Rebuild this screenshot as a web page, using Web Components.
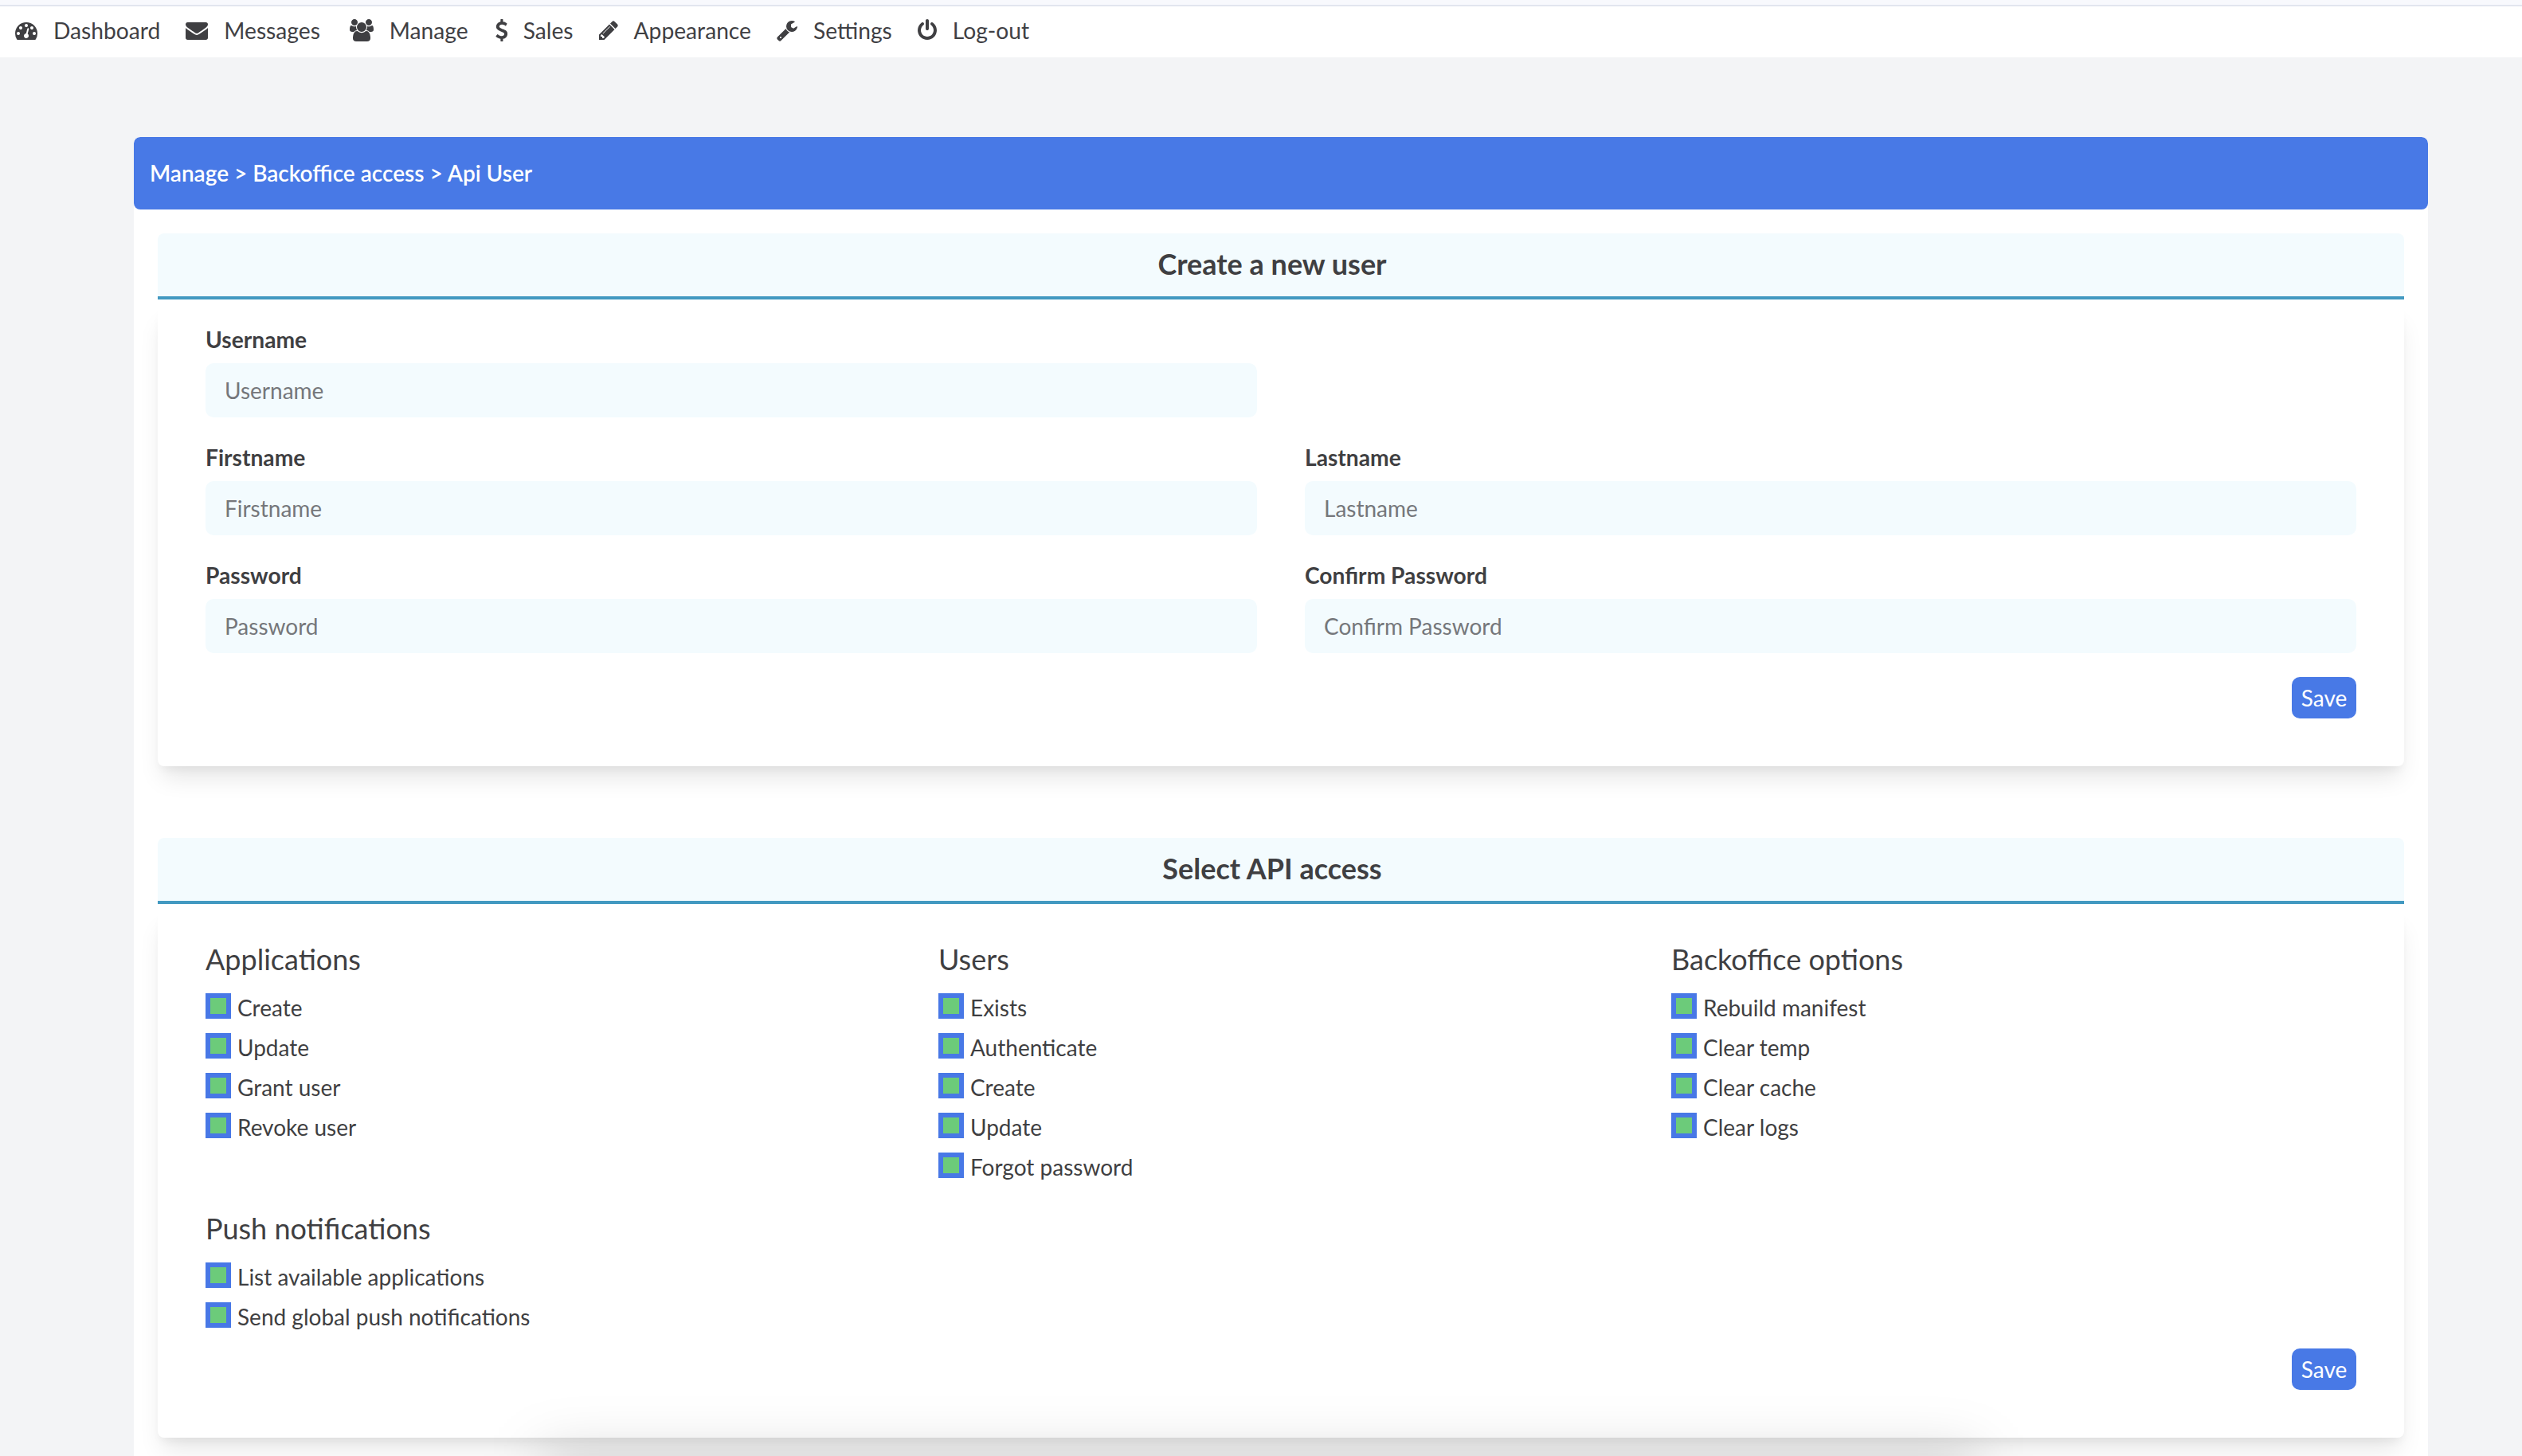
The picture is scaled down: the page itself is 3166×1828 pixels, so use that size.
<!DOCTYPE html>
<html>
<head>
<meta charset="utf-8">
<title>Api User</title>
<style>
    html, body { margin: 0; height: 100%; overflow: hidden; }
    body { background: #f3f4f6; color: #3f3f42; font: 28px/38px Lato, "Open Sans", sans-serif; }
</style>
</head>
<body>
<app-nav>
    <nav-item icon="dashboard">Dashboard</nav-item>
    <nav-item icon="envelope" style="margin-right: 5px">Messages</nav-item>
    <nav-item icon="users">Manage</nav-item>
    <nav-item icon="usd">Sales</nav-item>
    <nav-item icon="pencil">Appearance</nav-item>
    <nav-item icon="wrench">Settings</nav-item>
    <nav-item icon="power">Log-out</nav-item>
</app-nav>

<page-panel crumbs="Manage &gt; Backoffice access &gt; Api User">
    <section-card heading="Create a new user">
        <field-grid>
            <form-field label="Username"></form-field>
            <span></span>
            <form-field label="Firstname"></form-field>
            <form-field label="Lastname"></form-field>
            <form-field label="Password" type="password"></form-field>
            <form-field label="Confirm Password" type="password"></form-field>
        </field-grid>
        <save-button slot="footer">Save</save-button>
    </section-card>

    <section-card heading="Select API access" class="access">
        <access-grid>
            <access-group heading="Applications" items="Create|Update|Grant user|Revoke user"></access-group>
            <access-group heading="Users" items="Exists|Authenticate|Create|Update|Forgot password"></access-group>
            <access-group heading="Backoffice options" items="Rebuild manifest|Clear temp|Clear cache|Clear logs"></access-group>
            <access-group heading="Push notifications" items="List available applications|Send global push notifications"></access-group>
        </access-grid>
        <save-button slot="footer">Save</save-button>
    </section-card>
</page-panel>

<script>
const ICONS = {
    dashboard: ["0 0 1792 1792", "M384 1152q0-53-37.500-90.500t-90.500-37.500-90.500 37.500-37.500 90.500 37.500 90.500 90.500 37.500 90.500-37.500 37.500-90.500zm192-448q0-53-37.500-90.500t-90.500-37.500-90.500 37.500-37.500 90.500 37.500 90.500 90.500 37.500 90.500-37.500 37.500-90.500zm428 481l101-382q6-26-7.500-48.500t-38.500-29.500-48 6.500-30 39.500l-101 382q-60 5-107 43.500t-63 98.500q-20 77 20 146t117 89 146-20 89-117q16-60-6-117t-72-91zm660-33q0-53-37.500-90.500t-90.500-37.500-90.500 37.500-37.500 90.500 37.500 90.500 90.500 37.500 90.500-37.500 37.500-90.500zm-640-640q0-53-37.500-90.500t-90.500-37.500-90.500 37.500-37.500 90.500 37.500 90.500 90.500 37.500 90.500-37.500 37.500-90.500zm448 192q0-53-37.500-90.500t-90.500-37.500-90.500 37.500-37.500 90.500 37.500 90.500 90.500 37.500 90.500-37.500 37.500-90.500zm320 448q0 261-141 483-19 29-54 29h-1402q-35 0-54-29-141-221-141-483 0-182 71-348t191-286 286-191 348-71 348 71 286 191 191 286 71 348z"],
    envelope: ["0 0 1792 1792", "M1792 710v794q0 66-47 113t-113 47h-1472q-66 0-113-47t-47-113v-794q44 49 101 87 362 246 497 345 57 42 92.500 65.500t94.500 48 110 24.500h2q51 0 110-24.500t94.500-48 92.500-65.500q170-123 498-345 57-39 100-87zm0-294q0 79-49 151t-122 123q-376 261-468 325-10 7-42.500 30.500t-54 38-52 32.500-57.500 27-50 9h-2q-23 0-50-9t-57.500-27-52-32.500-54-38-42.500-30.500q-91-64-262-182.500t-205-142.500q-62-42-117-115.500t-55-136.500q0-78 41.500-130t118.500-52h1472q65 0 112.500 47t47.500 113z"],
    users: ["0 0 1920 1792", "M593 896q-162 5-265 128h-134q-82 0-138-40.500t-56-118.500q0-353 124-353 6 0 43.500 21t97.500 42.500 119 21.500q67 0 133-23-5 37-5 66 0 139 81 256zm1071 637q0 120-73 189.500t-194 69.500h-874q-121 0-194-69.500t-73-189.500q0-53 3.500-103.500t14-109 26.500-108.500 43-97.500 62-81 85.500-53.500 111.500-20q10 0 43 21.500t73 48 107 48 135 21.500 135-21.500 107-48 73-48 43-21.500q61 0 111.500 20t85.500 53.500 62 81 43 97.500 26.500 108.500 14 109 3.500 103.500zm-1024-1277q0 106-75 181t-181 75-181-75-75-181 75-181 181-75 181 75 75 181zm704 384q0 159-112.500 271.500t-271.500 112.500-271.500-112.500-112.500-271.500 112.500-271.500 271.500-112.500 271.500 112.500 112.500 271.500zm576 225q0 78-56 118.500t-138 40.500h-134q-103-123-265-128 81-117 81-256 0-29-5-66 66 23 133 23 59 0 119-21.500t97.500-42.500 43.500-21q124 0 124 353zm-128-609q0 106-75 181t-181 75-181-75-75-181 75-181 181-75 181 75 75 181z"],
    usd: ["270 0 1092 1792", "M1362 1185q0 153-99.500 263.500t-258.500 136.500v175q0 14-9 23t-23 9h-135q-13 0-22.500-9.500t-9.500-22.500v-175q-66-9-127.500-31t-101.500-44.500-74-48-46.500-37.500-17.500-18q-17-21-2-41l103-135q7-10 23-12 15-2 24 9l2 2q113 99 243 125 37 8 74 8 81 0 142.500-43t61.500-122q0-28-15-53t-33.500-42-58.500-37.500-66-32-80-32.500q-39-16-61.500-25t-61.500-26.500-62.500-31-56.500-35.500-53.500-42.500-43.500-49-35.500-58-21-66.500-8.500-78q0-138 98-242t255-134v-180q0-13 9.500-22.500t22.500-9.500h135q14 0 23 9t9 23v176q57 6 110.500 23t87 33.500 63.500 37.500 39 29 15 14q17 18 5 38l-81 146q-8 15-23 16-14 3-27-7-3-3-14.500-12t-39-26.500-58.500-32-74.500-26-85.500-11.500q-95 0-155 43t-60 111q0 26 8.500 48t29.500 41.500 39.500 33 56 31 60.500 27 70 27.500q53 20 81 31.500t76 35 75.500 42.500 62 50 53 63.500 31.500 76.500 13 94z"],
    pencil: ["128 0 1536 1792", "M491 1536l91-91-235-235-91 91v107h128v128h107zm523-928q0-22-22-22-10 0-17 7l-542 542q-7 7-7 17 0 22 22 22 10 0 17-7l542-542q7-7 7-17zm-54-192l416 416-832 832h-416v-416zm683 96q0 53-37 90l-166 166-416-416 166-165q36-38 90-38 53 0 91 38l235 234q37 39 37 91z"],
    wrench: ["64 0 1664 1792", "M448 1472q0-26-19-45t-45-19-45 19-19 45 19 45 45 19 45-19 19-45zm644-420l-682 682q-37 37-90 37-52 0-91-37l-106-108q-38-36-38-90 0-53 38-91l681-681q39 98 114.500 173.500t173.500 114.500zm634-435q0 39-23 106-47 134-164.500 217.500t-258.500 83.500q-185 0-316.500-131.500t-131.500-316.500 131.500-316.500 316.500-131.500q58 0 121.500 16.500t107.500 46.500q16 11 16 28t-16 28l-293 169v224l193 107q5-3 79-48.500t135.500-81 70.500-35.500q15 0 23.500 10t8.500 25z"],
    power: ["128 0 1536 1792", "M1664 896q0 156-61 298t-164 245-245 164-298 61-298-61-245-164-164-245-61-298q0-182 80.500-343t226.500-270q43-32 95.500-25t83.500 50q32 42 24.500 94.500t-49.500 84.500q-98 74-151.500 181t-53.500 228q0 104 40.500 198.500t109.500 163.500 163.500 109.500 198.500 40.500 198.500-40.500 163.500-109.500 109.500-163.500 40.500-198.500q0-121-53.500-228t-151.500-181q-42-32-49.500-84.500t24.500-94.500q31-43 84-50t95 25q146 109 226.500 270t80.500 343zm-640-768v640q0 52-38 90t-90 38-90-38-38-90v-640q0-52 38-90t90-38 90 38 38 90z"]
};

class AppNav extends HTMLElement {
    constructor() {
        super();
        this.attachShadow({ mode: "open" }).innerHTML = `
            <style>
                :host {
                    display: flex;
                    box-sizing: border-box;
                    height: 72px;
                    padding: 0 0 2px 19px;
                    gap: 32px;
                    align-items: center;
                    background: white;
                    border-top: 6px solid #f8f9fd;
                    box-shadow: inset 0 2px 0 #e2e6ef;
                    font-size: 28.2px;
                }
            </style>
            <slot></slot>
        `;
    }
}

class NavItem extends HTMLElement {
    constructor() {
        super();
        const [box, path] = ICONS[this.getAttribute("icon")];
        const [, , w, h] = box.split(" ").map(Number);
        this.attachShadow({ mode: "open" }).innerHTML = `
            <style>
                :host {
                    display: flex;
                    align-items: center;
                    gap: 20px;
                    color: #404044;
                    line-height: 36px;
                }
                svg { height: 28px; width: ${28 * w / h}px; fill: #3f3f42; display: block; }
            </style>
            <svg viewBox="${box}"><path d="${path}"></path></svg>
            <slot></slot>
        `;
    }
}

class PagePanel extends HTMLElement {
    constructor() {
        super();
        this.attachShadow({ mode: "open" }).innerHTML = `
            <style>
                :host {
                    display: block;
                    margin: 100px 118px 0 168px;
                    height: 1656px;
                    background: white;
                    border-radius: 8px 8px 0 0;
                    position: relative;
                    overflow: hidden;
                }
                /* shadow of whatever sits just under the fold */
                :host::after {
                    content: "";
                    position: absolute;
                    left: 512px;
                    top: 1653px;
                    width: 1800px;
                    height: 200px;
                    background: rgba(0, 0, 0, 0.17);
                    filter: blur(35px);
                }
                .crumbs {
                    box-sizing: border-box;
                    height: 91px;
                    padding: 0 0 2px 20px;
                    display: flex;
                    align-items: center;
                    background: #4879e6;
                    color: white;
                    font-weight: 600;
                    border-radius: 8px;
                }
                .body {
                    padding: 30px 30px 0;
                    display: flex;
                    flex-direction: column;
                    gap: 90px;
                }
            </style>
            <div class="crumbs"></div>
            <div class="body"><slot></slot></div>
        `;
        this.shadowRoot.querySelector(".crumbs").textContent = this.getAttribute("crumbs");
    }
}

class SectionCard extends HTMLElement {
    constructor() {
        super();
        this.attachShadow({ mode: "open" }).innerHTML = `
            <style>
                :host { display: block; }
                .head {
                    box-sizing: border-box;
                    height: 83px;
                    padding: 0 22px 4px 0;
                    display: flex;
                    align-items: center;
                    justify-content: center;
                    background: #f3fbfe;
                    border-bottom: 4px solid #4299c1;
                    border-radius: 8px 8px 0 0;
                    font-size: 36px;
                    font-weight: 700;
                }
                .card {
                    margin-top: 8px;
                    padding: 22px 60px 60px;
                    background: white;
                    border-radius: 8px;
                    box-shadow: 0 20px 30px -6px rgba(0, 0, 0, 0.1), 0 8px 12px -4px rgba(0, 0, 0, 0.05);
                }
                .footer { display: flex; justify-content: flex-end; margin-top: 30px; }
                :host(.access) .card { padding-top: 37px; }
                :host(.access) .footer { margin-top: 8px; }
            </style>
            <div class="head"></div>
            <div class="card">
                <slot></slot>
                <div class="footer"><slot name="footer"></slot></div>
            </div>
        `;
        this.shadowRoot.querySelector(".head").textContent = this.getAttribute("heading");
    }
}

class FieldGrid extends HTMLElement {
    constructor() {
        super();
        this.attachShadow({ mode: "open" }).innerHTML = `
            <style>
                :host { display: grid; grid-template-columns: 1fr 1fr; gap: 30px 60px; }
            </style>
            <slot></slot>
        `;
    }
}

class FormField extends HTMLElement {
    constructor() {
        super();
        this.attachShadow({ mode: "open" }).innerHTML = `
            <style>
                :host { display: block; }
                label { display: block; height: 40px; line-height: 40px; margin-bottom: 10px; font-weight: 700; font-size: 28.2px; }
                input {
                    display: block;
                    box-sizing: border-box;
                    width: 100%;
                    height: 68px;
                    padding: 0 24px;
                    border: 0;
                    border-radius: 10px;
                    background: #f3fbfe;
                    color: #3f3f42;
                    font: inherit;
                }
                input::placeholder { color: #75777b; opacity: 1; }
            </style>
            <label></label>
            <input>
        `;
        const name = this.getAttribute("label");
        this.shadowRoot.querySelector("label").textContent = name;
        const input = this.shadowRoot.querySelector("input");
        input.placeholder = name;
        input.type = this.getAttribute("type") || "text";
    }
}

class AccessGrid extends HTMLElement {
    constructor() {
        super();
        this.attachShadow({ mode: "open" }).innerHTML = `
            <style>
                :host { display: grid; grid-template-columns: repeat(3, 1fr); gap: 21px 60px; }
            </style>
            <slot></slot>
        `;
    }
}

class AccessGroup extends HTMLElement {
    constructor() {
        super();
        this.attachShadow({ mode: "open" }).innerHTML = `
            <style>
                :host { display: block; }
                h3 { margin: 0 0 19px; font-size: 36px; line-height: 48px; font-weight: 400; }
            </style>
            <h3></h3>
            <div class="items"></div>
        `;
        this.shadowRoot.querySelector("h3").textContent = this.getAttribute("heading");
        const items = this.shadowRoot.querySelector(".items");
        for (const text of this.getAttribute("items").split("|")) {
            const item = document.createElement("check-item");
            item.textContent = text;
            items.appendChild(item);
        }
    }
}

class CheckItem extends HTMLElement {
    constructor() {
        super();
        this.attachShadow({ mode: "open" }).innerHTML = `
            <style>
                :host { display: flex; height: 50px; gap: 8px; align-items: flex-start; line-height: 36px; }
                .box {
                    box-sizing: border-box;
                    flex: none;
                    width: 32px;
                    height: 32px;
                    border: 6px solid #4878e6;
                    background: #6ccb7a;
                }
            </style>
            <span class="box"></span>
            <slot></slot>
        `;
    }
}

class SaveButton extends HTMLElement {
    constructor() {
        super();
        this.attachShadow({ mode: "open" }).innerHTML = `
            <style>
                :host {
                    display: block;
                    width: 81px;
                    height: 52px;
                    line-height: 52px;
                    text-align: center;
                    background: #4879e6;
                    color: white;
                    border-radius: 10px;
                    font-size: 28px;
                }
            </style>
            <slot></slot>
        `;
    }
}

customElements.define("app-nav", AppNav);
customElements.define("nav-item", NavItem);
customElements.define("page-panel", PagePanel);
customElements.define("section-card", SectionCard);
customElements.define("field-grid", FieldGrid);
customElements.define("form-field", FormField);
customElements.define("access-grid", AccessGrid);
customElements.define("access-group", AccessGroup);
customElements.define("check-item", CheckItem);
customElements.define("save-button", SaveButton);
</script>
</body>
</html>
